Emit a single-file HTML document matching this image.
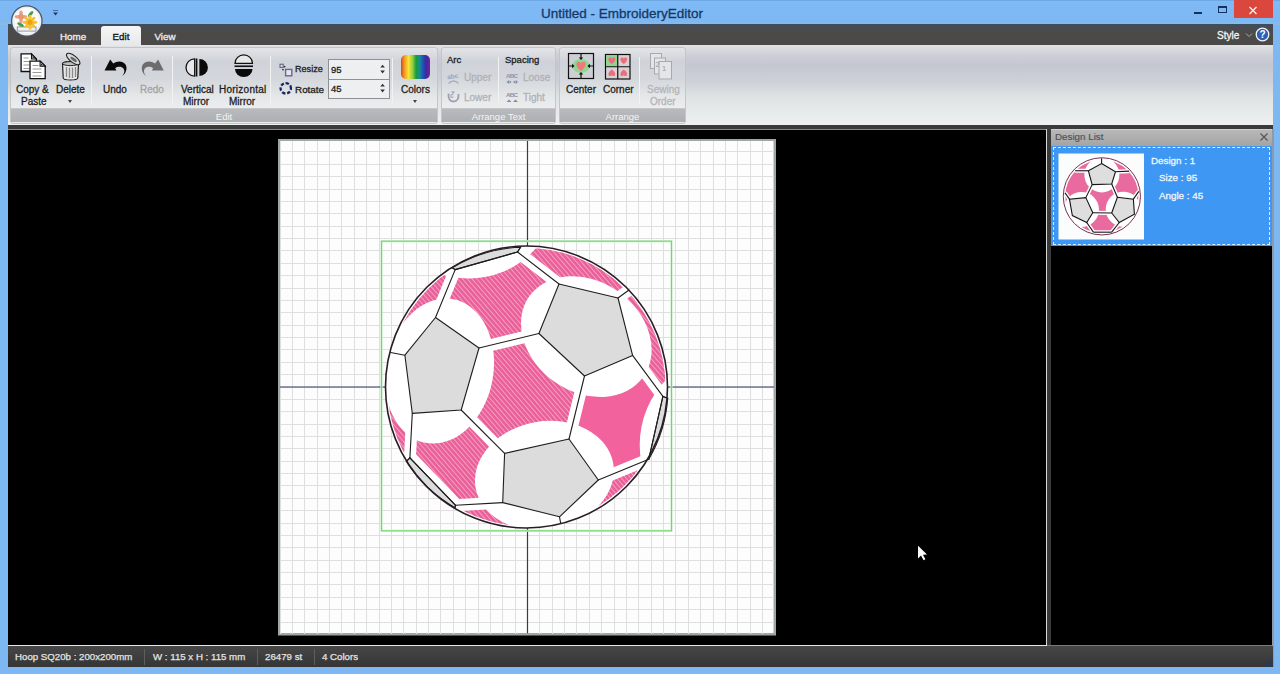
<!DOCTYPE html>
<html><head><meta charset="utf-8">
<style>
*{margin:0;padding:0;box-sizing:border-box}
html,body{width:1280px;height:674px;overflow:hidden;background:#7db8f2;font-family:"Liberation Sans",sans-serif}
.a{position:absolute}
.t{position:absolute;white-space:nowrap;font-size:10px;color:#1e1e1e;line-height:1;-webkit-text-stroke:0.3px currentColor}
#title{left:0;top:0;width:1280px;height:25px;background:linear-gradient(#66a0da 0px,#7fbaf6 1.5px,#7db8f4 21px,#8cbbe4 24px)}
#tabs{left:8px;top:24px;width:1265px;height:21px;background:linear-gradient(#3c4e62 0px,#474b52 3px,#4b4a49 8px,#4b4a49 100%)}
#ribbon{left:8px;top:45px;width:1265px;height:80px;background:linear-gradient(#e2e3e7 0%,#cdd0d7 12%,#c4c7d0 25%,#cdd1d7 45%,#dfe3e4 65%,#e9eded 92%,#f0f2f2 100%)}
.grp{position:absolute;top:47px;height:77px;border:1px solid #c3c5c9;border-radius:3px;background:linear-gradient(#e4e5e9 0%,#cfd2d8 18%,#d3d6db 40%,#e3e6e7 62%,#eceeee 80%)}
.glab{position:absolute;left:0;right:0;bottom:1px;height:14px;background:linear-gradient(#b9babd,#aeafb2);color:#f4f4f4;font-size:9.5px;text-align:center;line-height:15px;border-top:1px solid #c5c6c8}
.sep{position:absolute;width:1px;background:#c5c7ca;border-right:1px solid #f2f2f2}
#under{left:8px;top:125px;width:1265px;height:4px;background:#3b3b3b}
#canvas{left:8px;top:129px;width:1038px;height:516px;background:#000;border-top:1px solid #8a8a8a}
#status{left:8px;top:646px;width:1265px;height:21px;background:linear-gradient(#474747,#353535)}
.st{position:absolute;top:651px;color:#e4e4e4;font-size:9.7px;white-space:nowrap;line-height:12px;-webkit-text-stroke:0.25px currentColor}
.ss{position:absolute;top:649px;width:1px;height:16px;background:#5e5e5e}
</style></head><body>
<div id="title" class="a"></div>
<div class="t" style="left:541px;top:7px;font-size:13.5px;color:#17375f">Untitled - EmbroideryEditor</div>

<div id="tabs" class="a"></div>
<div id="ribbon" class="a"></div>
<!-- app button -->
<svg class="a" style="left:0;top:0" width="50" height="44" viewBox="0 0 50 44">
 <circle cx="26.8" cy="21" r="15.8" fill="#4c5468"/>
 <circle cx="26.8" cy="21" r="14.6" fill="#eef0f0"/>
 <circle cx="26.8" cy="20.5" r="12.5" fill="#fbfbfb"/>
 <rect x="17.3" y="26.9" width="18.7" height="4.2" fill="#f0f0ee" stroke="#8c8c94" stroke-width="0.9"/>
 <g fill="#e9977a" opacity="0.9">
  <ellipse cx="21" cy="13.5" rx="1.8" ry="3"/><ellipse cx="21" cy="20" rx="1.8" ry="3"/>
  <ellipse cx="17.8" cy="16.7" rx="3" ry="1.8"/><ellipse cx="24.2" cy="16.7" rx="3" ry="1.8"/>
  <circle cx="21" cy="16.7" r="2.6" fill="#e88a5c"/>
 </g>
 <ellipse cx="30.6" cy="14" rx="1.5" ry="3.6" transform="rotate(40 30.6 14)" fill="#4c9a50"/>
 <ellipse cx="20.5" cy="24.6" rx="1.5" ry="3.6" transform="rotate(-60 20.5 24.6)" fill="#4c9a50"/>
 <g fill="#f6c22a">
  <ellipse cx="30" cy="18" rx="1.6" ry="3.2"/><ellipse cx="30" cy="26.6" rx="1.6" ry="3.2"/>
  <ellipse cx="25.7" cy="22.3" rx="3.2" ry="1.6"/><ellipse cx="34.3" cy="22.3" rx="3.2" ry="1.6"/>
  <ellipse cx="27" cy="19.3" rx="1.5" ry="3" transform="rotate(-45 27 19.3)"/><ellipse cx="33" cy="25.3" rx="1.5" ry="3" transform="rotate(-45 33 25.3)"/>
  <ellipse cx="33" cy="19.3" rx="1.5" ry="3" transform="rotate(45 33 19.3)"/><ellipse cx="27" cy="25.3" rx="1.5" ry="3" transform="rotate(45 27 25.3)"/>
 </g>
 <circle cx="30" cy="22.3" r="2.6" fill="#f0a010"/>
</svg>
<svg class="a" style="left:51px;top:9px" width="10" height="8" viewBox="0 0 10 8">
 <path d="M2,1.5h5" stroke="#3b5b8c" stroke-width="0.8"/><path d="M2,3.5h5l-2.5,3z" fill="#1f3b6c"/>
</svg>
<!-- window controls -->
<div class="a" style="left:1194px;top:11.5px;width:8px;height:2px;background:#15315e"></div>
<div class="a" style="left:1218px;top:6px;width:9px;height:7px;border:1px solid #15315e;border-top-width:2px"></div>
<div class="a" style="left:1234px;top:0;width:39px;height:18px;background:#d9473d"></div>
<svg class="a" style="left:1248px;top:6px" width="11" height="10" viewBox="0 0 11 10"><path d="M1.5,1L8.5,8M8.5,1L1.5,8" stroke="#f6f0ee" stroke-width="1.4"/></svg>
<!-- tabs -->
<div class="a" style="left:101px;top:26px;width:40px;height:20px;border-radius:3px 3px 0 0;background:linear-gradient(#f6f6f6,#e6e7e9)"></div>
<div class="t" style="left:60px;top:31.8px;font-size:9.8px;color:#f0f0f0">Home</div>
<div class="t" style="left:112.5px;top:31.8px;font-size:9.8px;color:#111">Edit</div>
<div class="t" style="left:154.5px;top:31.8px;font-size:9.8px;color:#f0f0f0">View</div>
<div class="t" style="left:1217px;top:30.5px;color:#f4f4f4">Style</div>
<svg class="a" style="left:1245px;top:32px" width="8" height="6" viewBox="0 0 8 6"><path d="M1,1.5L4,4.5L7,1.5" fill="none" stroke="#aaa" stroke-width="1"/></svg>
<svg class="a" style="left:1255px;top:27px" width="15" height="15" viewBox="0 0 15 15">
 <circle cx="7.5" cy="7.5" r="6.3" fill="#2d5fb8" stroke="#f2f4fa" stroke-width="1.3"/>
 <text x="7.5" y="11.2" text-anchor="middle" font-size="10" font-weight="bold" fill="#fff" font-family="Liberation Sans">?</text>
</svg>


<!-- ribbon groups -->
<div class="grp" style="left:10px;width:428px"><div class="glab" style="padding-left:0">Edit</div></div>
<div class="grp" style="left:441px;width:115px"><div class="glab">Arrange Text</div></div>
<div class="grp" style="left:559px;width:127px"><div class="glab">Arrange</div></div>
<div class="sep" style="left:91px;top:56px;height:49px"></div>
<div class="sep" style="left:172px;top:56px;height:49px"></div>
<div class="sep" style="left:270px;top:56px;height:49px"></div>
<div class="sep" style="left:392px;top:58px;height:45px"></div>
<div class="sep" style="left:498px;top:57px;height:45px"></div>
<div class="sep" style="left:639px;top:57px;height:47px"></div>

<!-- copy & paste icon -->
<svg class="a" style="left:19px;top:52px" width="30" height="30" viewBox="0 0 30 30">
 <path d="M2.1,1.9 H12.5 L17.3,7 V19.5 H2.1 Z" fill="#fff" stroke="#111" stroke-width="1.3"/>
 <path d="M12.5,1.9 V7 H17.3 Z" fill="#fff" stroke="#111" stroke-width="1.1"/><path d="M13.4,4 V6.2 H15.6Z" fill="#222"/>
 <path d="M4.5,6h5M4.5,9.5h6M4.5,13h6M4.5,16.5h6" stroke="#9a9a9a" stroke-width="1"/>
 <path d="M11,9.1 H21.1 L26.2,14.1 V26.6 H11 Z" fill="#fff" stroke="#111" stroke-width="1.3"/>
 <path d="M21.1,9.1 V14.1 H26.2 Z" fill="#fff" stroke="#111" stroke-width="1.1"/><path d="M22,11.2 V13.3 H24.2Z" fill="#222"/>
 <path d="M13.5,13.5h6M13.5,17h9M13.5,20.5h9M13.5,24h9" stroke="#9a9a9a" stroke-width="1"/>
</svg>
<div class="t" style="left:16px;top:85px">Copy &amp;</div>
<div class="t" style="left:21px;top:97px">Paste</div>

<!-- delete icon -->
<svg class="a" style="left:60px;top:51px" width="24" height="31" viewBox="0 0 24 31">
 <path d="M2.5,12.5 Q2.5,10.5 10.5,10.5 Q18.5,10.5 18.5,12.5 L17.8,27 Q17.5,29 10.5,29 Q3.5,29 3.2,27 Z" fill="#e6e6e6" stroke="#222" stroke-width="1.2"/>
 <ellipse cx="10.5" cy="12.6" rx="8" ry="2" fill="#bdbdbd" stroke="#222" stroke-width="1"/>
 <path d="M6.5,16v10M9.5,16.5v10.5M12.5,16.5v10.5M15.5,16v10" stroke="#8a8a8a" stroke-width="1.3"/>
 <ellipse cx="13.2" cy="8" rx="8.2" ry="3.3" transform="rotate(38 13.2 8)" fill="#d8d8d8" stroke="#222" stroke-width="1.1"/>
 <ellipse cx="13.6" cy="8.4" rx="3.8" ry="1.5" transform="rotate(38 13.6 8.4)" fill="#6a6a6a"/>
</svg>
<div class="t" style="left:56px;top:85px">Delete</div>
<div class="a" style="left:68px;top:100px;width:0;height:0;border-left:2.5px solid transparent;border-right:2.5px solid transparent;border-top:3px solid #444"></div>

<!-- undo / redo -->
<svg class="a" style="left:98px;top:50px" width="34" height="30" viewBox="0 0 34 30">
 <path d="M12.2,9.5 L6.5,20.5 L18.4,20.5 L17.2,18.2 C19.5,16.5 23.5,16.2 25.5,18.5 C27,20.5 26.5,23.5 24.3,26.1 C28.6,23 29.5,17.5 27.5,14.5 C25,11 19.5,10.5 15.2,13.6 Z" fill="#0a0a0a"/>
</svg>
<div class="t" style="left:103px;top:85px">Undo</div>
<svg class="a" style="left:137px;top:50px" width="34" height="30" viewBox="0 0 34 30">
 <g transform="translate(34 0) scale(-1 1)"><path d="M12.9,9.5 L7.2,20.5 L19.1,20.5 L17.9,18.2 C20.2,16.5 24.2,16.2 26.2,18.5 C27.7,20.5 27.2,23.5 25,26.1 C29.3,23 30.2,17.5 28.2,14.5 C25.7,11 20.2,10.5 15.9,13.6 Z" fill="#6c6c6c"/></g>
</svg>
<div class="t" style="left:140px;top:85px;color:#a3a3a3">Redo</div>

<!-- vertical mirror -->
<svg class="a" style="left:180px;top:52px" width="34" height="30" viewBox="0 0 34 30">
 <path d="M14.7,6.8 A8.7,8.7 0 0 0 14.7,24.2 Z" fill="#e8e8ea" stroke="#111" stroke-width="1.3"/>
 <path d="M16.6,6.5 V24.5" stroke="#111" stroke-width="1.6"/>
 <path d="M19.4,7 A8.5,8.5 0 0 1 19.4,24 Z" fill="#0a0a0a"/>
</svg>
<div class="t" style="left:181px;top:85px">Vertical</div>
<div class="t" style="left:183px;top:97px">Mirror</div>

<!-- horizontal mirror -->
<svg class="a" style="left:226px;top:50px" width="34" height="30" viewBox="0 0 34 30">
 <path d="M9,13.4 A8.75,8.5 0 0 1 26.5,13.4 Z" fill="#e8e8ea" stroke="#111" stroke-width="1.3"/>
 <path d="M8.5,16.25 H27" stroke="#111" stroke-width="1.6"/>
 <path d="M9,19 A8.75,8 0 0 0 26.5,19 Z" fill="#0a0a0a"/>
</svg>
<div class="t" style="left:219px;top:85px;letter-spacing:0.25px">Horizontal</div>
<div class="t" style="left:229px;top:97px">Mirror</div>

<!-- resize / rotate -->
<svg class="a" style="left:278px;top:62px" width="16" height="16" viewBox="0 0 16 16">
 <rect x="2" y="2.2" width="3.2" height="3.2" fill="#dcdcf0" stroke="#5a5a80" stroke-width="1"/>
 <circle cx="6.6" cy="4.6" r="0.9" fill="#333"/>
 <circle cx="5" cy="7.6" r="0.9" fill="#333"/>
 <rect x="7.6" y="7.4" width="6.2" height="6.4" fill="#e4e4f2" stroke="#6a6690" stroke-width="1.4"/>
</svg>
<div class="t" style="left:295px;top:65px;font-size:9.1px">Resize</div>
<svg class="a" style="left:278px;top:81px" width="16" height="16" viewBox="0 0 16 16">
 <circle cx="7.8" cy="7.3" r="5.2" fill="none" stroke="#1c2466" stroke-width="2.3" stroke-dasharray="3.3 1.8" transform="rotate(-20 7.8 7.3)"/>
</svg>
<div class="t" style="left:295px;top:84.5px;font-size:9.9px">Rotate</div>

<!-- inputs -->
<div class="a" style="left:328px;top:59px;width:62px;height:40px;border:1px solid #8e9094;background:#eeeff0"></div>
<div class="a" style="left:329px;top:79px;width:60px;height:1px;background:#8e9094"></div>
<div class="t" style="left:331px;top:65px;font-size:9.5px">95</div>
<div class="t" style="left:331px;top:84px;font-size:9.5px">45</div>
<svg class="a" style="left:378px;top:62px" width="10" height="34" viewBox="0 0 10 34">
 <path d="M2.3,5.6 L4.6,2.8 L6.9,5.6Z M2.3,8.6 L4.6,11.4 L6.9,8.6Z M2.3,24.6 L4.6,21.8 L6.9,24.6Z M2.3,27.6 L4.6,30.4 L6.9,27.6Z" fill="#333"/>
</svg>

<!-- colors -->
<div class="a" style="left:401px;top:55px;width:29px;height:24px;border-radius:5px;background:linear-gradient(90deg,#e2431a 0%,#f29b1e 12%,#f7e53a 26%,#8fd040 40%,#1c9a3a 52%,#16918e 63%,#1d58b8 75%,#3a2aa0 86%,#7a1ea0 100%)"></div>
<div class="t" style="left:401px;top:85px">Colors</div>
<div class="a" style="left:413px;top:100px;width:0;height:0;border-left:2.5px solid transparent;border-right:2.5px solid transparent;border-top:3px solid #444"></div>

<!-- arrange text -->
<div class="t" style="left:447px;top:55px;font-size:9.5px">Arc</div>
<div class="t" style="left:505px;top:55px;font-size:9.5px">Spacing</div>
<svg class="a" style="left:446px;top:71px" width="16" height="34" viewBox="0 0 16 34">
 <text x="1" y="7.5" font-size="6.5" font-weight="bold" fill="#9da2b8" font-family="Liberation Sans" transform="rotate(-8 7 5)">abc</text>
 <path d="M2.5,12.5 Q7.5,7.5 12.5,12.5" fill="none" stroke="#a8acc0" stroke-width="1.4"/>
 <path d="M2.5,22.5 Q2,30.5 7.5,30.5 Q13,30.5 12.5,23" fill="none" stroke="#9ca0b6" stroke-width="1.8"/>
 <text x="4" y="26.5" font-size="6.5" font-weight="bold" fill="#9da2b8" font-family="Liberation Sans">c</text>
 <path d="M5,20.5 L9,20.5 L7,23Z" fill="#9da2b8"/>
</svg>
<div class="t" style="left:464px;top:73px;color:#b0b2b8">Upper</div>
<div class="t" style="left:464px;top:93px;color:#b0b2b8">Lower</div>
<svg class="a" style="left:505px;top:71px" width="16" height="34" viewBox="0 0 16 34">
 <text x="1" y="7" font-size="6.2" font-weight="bold" fill="#8d92ae" font-family="Liberation Sans" textLength="12">ABC</text>
 <path d="M1.5,11 L4,9.2 L4,12.8Z M6.5,11 L4.5,9.2 L4.5,12.8Z M8,11 L10.5,9.2 L10.5,12.8Z M13,11 L11,9.2 L11,12.8Z" fill="#858aa6"/>
 <text x="1" y="26" font-size="6.2" font-weight="bold" fill="#8d92ae" font-family="Liberation Sans" textLength="12">ABC</text>
 <path d="M1.5,31 L4,28.5 L6.5,31Z M8,31 L10.5,28.5 L13,31Z" fill="#858aa6"/>
</svg>
<div class="t" style="left:523px;top:73px;color:#b0b2b8">Loose</div>
<div class="t" style="left:523px;top:93px;color:#b0b2b8">Tight</div>

<!-- center icon -->
<svg class="a" style="left:566px;top:52px" width="30" height="28" viewBox="0 0 30 28">
 <rect x="2.5" y="1.5" width="25" height="25" fill="#ccd0d4" stroke="#111" stroke-width="1.2"/>
 <ellipse cx="15" cy="14" rx="8.5" ry="7" fill="#86d889" opacity="0.9"/>
 <path d="M15,19 C9.5,15 9.5,10.5 12,9.8 C13.5,9.4 14.5,10.3 15,11.2 C15.5,10.3 16.5,9.4 18,9.8 C20.5,10.5 20.5,15 15,19 Z" fill="#ee7a7a"/>
 <path d="M15,1.5V6M15,22V26.5M2.5,14H6.5M23.5,14H27.5" stroke="#111" stroke-width="1.2"/>
 <path d="M12.8,5.5h4.4L15,8Z M12.8,22.5h4.4L15,20Z M6,11.8v4.4L8.5,14Z M24,11.8v4.4L21.5,14Z" fill="#111"/>
</svg>
<div class="t" style="left:566px;top:85px">Center</div>
<svg class="a" style="left:603px;top:52px" width="30" height="28" viewBox="0 0 30 28">
 <rect x="2.5" y="2.5" width="24.5" height="24.5" fill="#d8d0d4" stroke="#111" stroke-width="1.2"/>
 <rect x="3" y="3" width="12" height="11.5" fill="#8fd38f"/>
 <path d="M14.75,2.5V27M2.5,14.75H27" stroke="#111" stroke-width="1.2"/>
 <g fill="#e8707a">
  <path d="M8.8,12 C4.8,9.3 4.8,6 6.6,5.5 C7.7,5.2 8.4,5.9 8.8,6.6 C9.2,5.9 9.9,5.2 11,5.5 C12.8,6 12.8,9.3 8.8,12Z"/>
  <path d="M20.8,12 C16.8,9.3 16.8,6 18.6,5.5 C19.7,5.2 20.4,5.9 20.8,6.6 C21.2,5.9 21.9,5.2 23,5.5 C24.8,6 24.8,9.3 20.8,12Z"/>
  <path d="M8.8,17.5 C4.8,20.2 4.8,23.5 6.6,24 C7.7,24.3 8.4,23.6 8.8,22.9 C9.2,23.6 9.9,24.3 11,24 C12.8,23.5 12.8,20.2 8.8,17.5Z"/>
  <path d="M20.8,17.5 C16.8,20.2 16.8,23.5 18.6,24 C19.7,24.3 20.4,23.6 20.8,22.9 C21.2,23.6 21.9,24.3 23,24 C24.8,23.5 24.8,20.2 20.8,17.5Z"/>
 </g>
</svg>
<div class="t" style="left:603px;top:85px">Corner</div>
<svg class="a" style="left:648px;top:51px" width="30" height="30" viewBox="0 0 30 30">
 <g fill="#e4e5e8" stroke="#a8a9ad" stroke-width="1">
 <rect x="2.5" y="2.5" width="11" height="15"/><rect x="6.5" y="7" width="11" height="16"/><rect x="11" y="10.5" width="12.5" height="17.5"/>
 </g>
 <text x="7.5" y="16" font-size="7" fill="#999" font-family="Liberation Sans">2</text>
 <text x="14" y="20" font-size="7.5" fill="#999" font-family="Liberation Sans">1</text>
</svg>
<div class="t" style="left:647px;top:85px;color:#b4b5b8">Sewing</div>
<div class="t" style="left:650px;top:97px;color:#b4b5b8">Order</div>

<div id="under" class="a"></div>
<div id="canvas" class="a"></div>
<!--CANVAS--><svg class="a" style="left:0;top:0" width="1046" height="645" viewBox="0 0 1046 645">
<rect x="278" y="139" width="498" height="496.5" fill="#9fa6a6"/>
<rect x="280.5" y="141" width="493" height="492.0" fill="#fdfdfd"/>
<path d="M280.10,141 V633.5 M292.47,141 V633.5 M280,151.97 H774 M304.84,141 V633.5 M280,164.34 H774 M317.21,141 V633.5 M280,176.71 H774 M329.58,141 V633.5 M280,189.08 H774 M341.95,141 V633.5 M280,201.45 H774 M354.32,141 V633.5 M280,213.82 H774 M366.69,141 V633.5 M280,226.19 H774 M379.06,141 V633.5 M280,238.56 H774 M391.43,141 V633.5 M280,250.93 H774 M403.80,141 V633.5 M280,263.30 H774 M416.17,141 V633.5 M280,275.67 H774 M428.54,141 V633.5 M280,288.04 H774 M440.91,141 V633.5 M280,300.41 H774 M453.28,141 V633.5 M280,312.78 H774 M465.65,141 V633.5 M280,325.15 H774 M478.02,141 V633.5 M280,337.52 H774 M490.39,141 V633.5 M280,349.89 H774 M502.76,141 V633.5 M280,362.26 H774 M515.13,141 V633.5 M280,374.63 H774 M527.50,141 V633.5 M280,387.00 H774 M539.87,141 V633.5 M280,399.37 H774 M552.24,141 V633.5 M280,411.74 H774 M564.61,141 V633.5 M280,424.11 H774 M576.98,141 V633.5 M280,436.48 H774 M589.35,141 V633.5 M280,448.85 H774 M601.72,141 V633.5 M280,461.22 H774 M614.09,141 V633.5 M280,473.59 H774 M626.46,141 V633.5 M280,485.96 H774 M638.83,141 V633.5 M280,498.33 H774 M651.20,141 V633.5 M280,510.70 H774 M663.57,141 V633.5 M280,523.07 H774 M675.94,141 V633.5 M280,535.44 H774 M688.31,141 V633.5 M280,547.81 H774 M700.68,141 V633.5 M280,560.18 H774 M713.05,141 V633.5 M280,572.55 H774 M725.42,141 V633.5 M280,584.92 H774 M737.79,141 V633.5 M280,597.29 H774 M750.16,141 V633.5 M280,609.66 H774 M762.53,141 V633.5 M280,622.03 H774" stroke="#dfdfdf" stroke-width="1" fill="none" shape-rendering="crispEdges"/>
<path d="M527.5,141 V633.5 M280,387.0 H774" stroke="#2f3a62" stroke-width="1.2"/>
<rect x="381.5" y="241.2" width="290" height="289.6" fill="none" stroke="#c8f0c8" stroke-width="2.2"/>
<rect x="381.5" y="241.2" width="290" height="289.6" fill="none" stroke="#72d472" stroke-width="1"/>
<defs><clipPath id="ballclip"><circle cx="526.5" cy="387.0" r="141.0"/></clipPath>
<pattern id="hatch" width="3.6" height="4" patternUnits="userSpaceOnUse" patternTransform="rotate(-41)"><rect width="3.6" height="4" fill="#ea5f98"/><rect width="1" height="4" fill="#f4a0c3"/></pattern></defs>
<g clip-path="url(#ballclip)">
<circle cx="526.5" cy="387.0" r="141.0" fill="url(#hatch)"/>
<polygon points="584.5,376.0 632.6,355.4 662.9,396.4 648.8,459.2 598.3,480.0 569.0,439.0" fill="#f2629c"/>
<line x1="435.5" y1="317.5" x2="455.2" y2="269.6" stroke="#fff" stroke-width="12" stroke-linecap="round"/>
<line x1="455.2" y1="269.6" x2="517.5" y2="252.0" stroke="#fff" stroke-width="12" stroke-linecap="round"/>
<line x1="517.5" y1="252.0" x2="559.0" y2="284.0" stroke="#fff" stroke-width="12" stroke-linecap="round"/>
<line x1="538.9" y1="333.5" x2="479.0" y2="348.0" stroke="#fff" stroke-width="12" stroke-linecap="round"/>
<line x1="618.0" y1="298.0" x2="629.0" y2="290.0" stroke="#fff" stroke-width="12" stroke-linecap="round"/>
<line x1="632.6" y1="355.4" x2="662.9" y2="396.4" stroke="#fff" stroke-width="12" stroke-linecap="round"/>
<line x1="662.9" y1="396.4" x2="648.8" y2="459.2" stroke="#fff" stroke-width="12" stroke-linecap="round"/>
<line x1="584.5" y1="376.0" x2="569.0" y2="439.0" stroke="#fff" stroke-width="12" stroke-linecap="round"/>
<line x1="598.3" y1="480.0" x2="648.8" y2="459.2" stroke="#fff" stroke-width="12" stroke-linecap="round"/>
<line x1="559.5" y1="516.8" x2="560.6" y2="522.8" stroke="#fff" stroke-width="12" stroke-linecap="round"/>
<line x1="502.7" y1="502.6" x2="455.6" y2="505.3" stroke="#fff" stroke-width="12" stroke-linecap="round"/>
<line x1="455.6" y1="505.3" x2="409.9" y2="457.8" stroke="#fff" stroke-width="12" stroke-linecap="round"/>
<line x1="409.9" y1="457.8" x2="412.3" y2="413.4" stroke="#fff" stroke-width="12" stroke-linecap="round"/>
<line x1="404.9" y1="355.2" x2="390.7" y2="352.5" stroke="#fff" stroke-width="12" stroke-linecap="round"/>
<line x1="461.2" y1="410.0" x2="504.6" y2="453.4" stroke="#fff" stroke-width="12" stroke-linecap="round"/>
<line x1="517.5" y1="252.0" x2="520.6" y2="247.2" stroke="#fff" stroke-width="12" stroke-linecap="round"/>
<line x1="455.2" y1="269.6" x2="452.2" y2="267.8" stroke="#fff" stroke-width="12" stroke-linecap="round"/>
<line x1="662.9" y1="396.4" x2="667.7" y2="398.2" stroke="#fff" stroke-width="12" stroke-linecap="round"/>
<line x1="455.6" y1="505.3" x2="455.0" y2="507.7" stroke="#fff" stroke-width="12" stroke-linecap="round"/>
<line x1="409.9" y1="457.8" x2="406.4" y2="461.4" stroke="#fff" stroke-width="12" stroke-linecap="round"/>
<polygon points="435.5,317.5 479.0,348.0 461.2,410.0 412.3,413.4 404.9,355.2" fill="none" stroke="#fff" stroke-width="12" stroke-linejoin="round"/>
<polygon points="559.0,284.0 618.0,298.0 632.6,355.4 584.5,376.0 538.9,333.5" fill="none" stroke="#fff" stroke-width="12" stroke-linejoin="round"/>
<polygon points="504.6,453.4 569.0,439.0 598.3,480.0 559.5,516.8 502.7,502.6" fill="none" stroke="#fff" stroke-width="12" stroke-linejoin="round"/>
<circle cx="468.8" cy="189" r="89.5" fill="#fff"/>
<circle cx="733.7" cy="445" r="94" fill="#fff"/>
<line x1="455.6" y1="505.3" x2="409.9" y2="457.8" stroke="#fff" stroke-width="14" stroke-linecap="round"/>
<ellipse cx="439.5" cy="371.1" rx="73.1" ry="53.7" transform="rotate(-78.9 439.5 371.1)" fill="#fff"/>
<ellipse cx="586.3" cy="336.6" rx="69.8" ry="55.2" transform="rotate(-144.8 586.3 336.6)" fill="#fff"/>
<ellipse cx="544.4" cy="475.6" rx="69.9" ry="54.2" transform="rotate(169.8 544.4 475.6)" fill="#fff"/>
<circle cx="526.5" cy="387.0" r="141.0" fill="none" stroke="#fff" stroke-width="4"/>
</g>
<polygon points="435.5,317.5 479.0,348.0 461.2,410.0 412.3,413.4 404.9,355.2" fill="#dcdcdc" stroke="#1e1e1e" stroke-width="1.1" stroke-linejoin="round"/>
<polygon points="559.0,284.0 618.0,298.0 632.6,355.4 584.5,376.0 538.9,333.5" fill="#dcdcdc" stroke="#1e1e1e" stroke-width="1.1" stroke-linejoin="round"/>
<polygon points="504.6,453.4 569.0,439.0 598.3,480.0 559.5,516.8 502.7,502.6" fill="#dcdcdc" stroke="#1e1e1e" stroke-width="1.1" stroke-linejoin="round"/>
<path d="M452.2,267.8 L455.2,269.6 L517.5,252.0 L520.6,247.2 A141.0,141.0 0 0 0 452.2,267.8 Z" fill="#dcdcdc" stroke="#1e1e1e" stroke-width="1.1"/>
<path d="M667.7,398.2 L662.9,396.4 L648.8,459.2 A141.0,141.0 0 0 0 667.7,398.2 Z" fill="#dcdcdc" stroke="#1e1e1e" stroke-width="1.1"/>
<path d="M455.0,507.7 L455.6,505.3 L409.9,457.8 L406.4,461.4 A141.0,141.0 0 0 0 455.0,507.7 Z" fill="#dcdcdc" stroke="#1e1e1e" stroke-width="1.1"/>
<line x1="435.5" y1="317.5" x2="455.2" y2="269.6" stroke="#1e1e1e" stroke-width="1.1" stroke-linecap="round"/>
<line x1="455.2" y1="269.6" x2="517.5" y2="252.0" stroke="#1e1e1e" stroke-width="1.1" stroke-linecap="round"/>
<line x1="517.5" y1="252.0" x2="559.0" y2="284.0" stroke="#1e1e1e" stroke-width="1.1" stroke-linecap="round"/>
<line x1="538.9" y1="333.5" x2="479.0" y2="348.0" stroke="#1e1e1e" stroke-width="1.1" stroke-linecap="round"/>
<line x1="618.0" y1="298.0" x2="629.0" y2="290.0" stroke="#1e1e1e" stroke-width="1.1" stroke-linecap="round"/>
<line x1="632.6" y1="355.4" x2="662.9" y2="396.4" stroke="#1e1e1e" stroke-width="1.1" stroke-linecap="round"/>
<line x1="662.9" y1="396.4" x2="648.8" y2="459.2" stroke="#1e1e1e" stroke-width="1.1" stroke-linecap="round"/>
<line x1="584.5" y1="376.0" x2="569.0" y2="439.0" stroke="#1e1e1e" stroke-width="1.1" stroke-linecap="round"/>
<line x1="598.3" y1="480.0" x2="648.8" y2="459.2" stroke="#1e1e1e" stroke-width="1.1" stroke-linecap="round"/>
<line x1="559.5" y1="516.8" x2="560.6" y2="522.8" stroke="#1e1e1e" stroke-width="1.1" stroke-linecap="round"/>
<line x1="502.7" y1="502.6" x2="455.6" y2="505.3" stroke="#1e1e1e" stroke-width="1.1" stroke-linecap="round"/>
<line x1="455.6" y1="505.3" x2="409.9" y2="457.8" stroke="#1e1e1e" stroke-width="1.1" stroke-linecap="round"/>
<line x1="409.9" y1="457.8" x2="412.3" y2="413.4" stroke="#1e1e1e" stroke-width="1.1" stroke-linecap="round"/>
<line x1="404.9" y1="355.2" x2="390.7" y2="352.5" stroke="#1e1e1e" stroke-width="1.1" stroke-linecap="round"/>
<line x1="461.2" y1="410.0" x2="504.6" y2="453.4" stroke="#1e1e1e" stroke-width="1.1" stroke-linecap="round"/>
<line x1="517.5" y1="252.0" x2="520.6" y2="247.2" stroke="#1e1e1e" stroke-width="1.1" stroke-linecap="round"/>
<line x1="455.2" y1="269.6" x2="452.2" y2="267.8" stroke="#1e1e1e" stroke-width="1.1" stroke-linecap="round"/>
<line x1="662.9" y1="396.4" x2="667.7" y2="398.2" stroke="#1e1e1e" stroke-width="1.1" stroke-linecap="round"/>
<line x1="455.6" y1="505.3" x2="455.0" y2="507.7" stroke="#1e1e1e" stroke-width="1.1" stroke-linecap="round"/>
<line x1="409.9" y1="457.8" x2="406.4" y2="461.4" stroke="#1e1e1e" stroke-width="1.1" stroke-linecap="round"/>
<circle cx="526.5" cy="387.0" r="141.0" fill="none" stroke="#2a1e26" stroke-width="1.6"/>
</svg><!--/CANVAS-->
<div class="a" style="left:8px;top:645px;width:1039px;height:1px;background:#e8e8e8"></div>
<div class="a" style="left:1047px;top:645px;width:226px;height:1px;background:#7a7a7a"></div>
<svg class="a" style="left:910px;top:540px" width="24" height="26" viewBox="910 540 24 26"><path d="M918,545.8 L918,558.4 L921,555.6 L923.6,560.2 L925.4,559.3 L922.9,554.8 L927,554.6 Z" fill="#fff"/></svg>
<!--PANEL-->
<div class="a" style="left:1046px;top:129px;width:1px;height:516px;background:#d8d8d8"></div>
<div class="a" style="left:1047px;top:129px;width:4px;height:516px;background:#3a3a3a"></div>
<div class="a" style="left:1051px;top:129px;width:222px;height:516px;background:#000"></div>
<div class="a" style="left:1272px;top:129px;width:2px;height:538px;background:#8e9aa8"></div>
<div class="a" style="left:1051px;top:129px;width:221px;height:17px;background:linear-gradient(#b8b8b8,#a4a4a4);border-top:1px solid #d0d0d0"></div>
<div class="t" style="left:1055px;top:132px;color:#505050;font-size:9.8px;-webkit-text-stroke:0.15px #505050">Design List</div>
<svg class="a" style="left:1259px;top:132px" width="10" height="10" viewBox="0 0 10 10"><path d="M1.5,1.5L8.5,8.5M8.5,1.5L1.5,8.5" stroke="#555" stroke-width="1.2"/></svg>
<div class="a" style="left:1051px;top:146px;width:221px;height:100px;background:#3d97f3"></div>
<div class="a" style="left:1053px;top:147px;width:217px;height:98px;border:1px dashed #dfefff"></div>
<svg class="a" style="left:0;top:0" width="1280" height="674" viewBox="0 0 1280 674">
<rect x="1058.5" y="153.5" width="85.5" height="86" fill="#fbfdfd"/>
<defs><clipPath id="tclip"><circle cx="1101.87" cy="196.36" r="38.59"/></clipPath></defs>
<g clip-path="url(#tclip)"><circle cx="1101.87" cy="196.36" r="38.59" fill="#e96a9f"/>
<line x1="1092.16" y1="184.63" x2="1085.85" y2="197.62" stroke="#fff" stroke-width="4"/>
<line x1="1111.70" y1="184.00" x2="1117.38" y2="197.24" stroke="#fff" stroke-width="4"/>
<line x1="1092.79" y1="212.76" x2="1111.70" y2="213.01" stroke="#fff" stroke-width="4"/>
<line x1="1101.61" y1="163.58" x2="1101.61" y2="158.15" stroke="#fff" stroke-width="4"/>
<line x1="1115.49" y1="171.77" x2="1129.10" y2="171.14" stroke="#fff" stroke-width="4"/>
<line x1="1088.37" y1="170.76" x2="1075.13" y2="170.76" stroke="#fff" stroke-width="4"/>
<line x1="1069.46" y1="199.14" x2="1065.04" y2="192.83" stroke="#fff" stroke-width="4"/>
<line x1="1133.39" y1="199.14" x2="1138.81" y2="191.32" stroke="#fff" stroke-width="4"/>
<line x1="1119.27" y1="222.47" x2="1111.70" y2="232.18" stroke="#fff" stroke-width="4"/>
<line x1="1086.73" y1="222.47" x2="1093.42" y2="232.18" stroke="#fff" stroke-width="4"/>
<line x1="1093.42" y1="232.18" x2="1111.70" y2="232.18" stroke="#fff" stroke-width="4"/>
<circle cx="1101.87" cy="174.95" r="17.5" fill="#fff"/>
<polygon points="1101.61,163.58 1115.49,171.77 1111.70,184.00 1092.16,184.63 1088.37,170.76" fill="none" stroke="#fff" stroke-width="4"/>
<circle cx="1081.44" cy="209.50" r="17.5" fill="#fff"/>
<polygon points="1085.85,197.62 1092.79,212.76 1086.73,222.47 1072.36,215.53 1069.46,199.14" fill="none" stroke="#fff" stroke-width="4"/>
<circle cx="1123.23" cy="209.22" r="17.5" fill="#fff"/>
<polygon points="1117.38,197.24 1133.39,199.14 1134.40,214.27 1119.27,222.47 1111.70,213.01" fill="none" stroke="#fff" stroke-width="4"/>
<circle cx="1101.87" cy="196.36" r="38.59" fill="none" stroke="#fff" stroke-width="4"/>
</g>
<polygon points="1101.61,163.58 1115.49,171.77 1111.70,184.00 1092.16,184.63 1088.37,170.76" fill="#dedede" stroke="#151515" stroke-width="1.1"/>
<polygon points="1085.85,197.62 1092.79,212.76 1086.73,222.47 1072.36,215.53 1069.46,199.14" fill="#dedede" stroke="#151515" stroke-width="1.1"/>
<polygon points="1117.38,197.24 1133.39,199.14 1134.40,214.27 1119.27,222.47 1111.70,213.01" fill="#dedede" stroke="#151515" stroke-width="1.1"/>
<line x1="1092.16" y1="184.63" x2="1085.85" y2="197.62" stroke="#151515" stroke-width="1.1"/>
<line x1="1111.70" y1="184.00" x2="1117.38" y2="197.24" stroke="#151515" stroke-width="1.1"/>
<line x1="1092.79" y1="212.76" x2="1111.70" y2="213.01" stroke="#151515" stroke-width="1.1"/>
<line x1="1101.61" y1="163.58" x2="1101.61" y2="158.15" stroke="#151515" stroke-width="1.1"/>
<line x1="1115.49" y1="171.77" x2="1129.10" y2="171.14" stroke="#151515" stroke-width="1.1"/>
<line x1="1088.37" y1="170.76" x2="1075.13" y2="170.76" stroke="#151515" stroke-width="1.1"/>
<line x1="1069.46" y1="199.14" x2="1065.04" y2="192.83" stroke="#151515" stroke-width="1.1"/>
<line x1="1133.39" y1="199.14" x2="1138.81" y2="191.32" stroke="#151515" stroke-width="1.1"/>
<line x1="1119.27" y1="222.47" x2="1111.70" y2="232.18" stroke="#151515" stroke-width="1.1"/>
<line x1="1086.73" y1="222.47" x2="1093.42" y2="232.18" stroke="#151515" stroke-width="1.1"/>
<line x1="1093.42" y1="232.18" x2="1111.70" y2="232.18" stroke="#151515" stroke-width="1.1"/>
<circle cx="1101.87" cy="196.36" r="38.59" fill="none" stroke="#7a3050" stroke-width="1"/>
</svg>
<div class="t" style="left:1151px;top:156px;color:#eef6ff;font-size:9.8px">Design : 1</div>
<div class="t" style="left:1159px;top:173px;color:#eef6ff;font-size:9.8px">Size : 95</div>
<div class="t" style="left:1159px;top:191px;color:#eef6ff;font-size:9.8px">Angle : 45</div>
<!--/PANEL-->
<div id="status" class="a"></div>
<div class="st" style="left:15px">Hoop SQ20b : 200x200mm</div>
<div class="ss" style="left:144px"></div>
<div class="st" style="left:153px">W : 115 x H : 115 mm</div>
<div class="ss" style="left:257px"></div>
<div class="st" style="left:265px">26479 st</div>
<div class="ss" style="left:314px"></div>
<div class="st" style="left:322px">4 Colors</div>
<svg class="a" style="left:1262px;top:657px" width="11" height="10" viewBox="0 0 11 10"><path d="M3,9 L9,3 M6,9 L9,6" stroke="#1c3c6c" stroke-width="1.6"/></svg>
</body></html>
